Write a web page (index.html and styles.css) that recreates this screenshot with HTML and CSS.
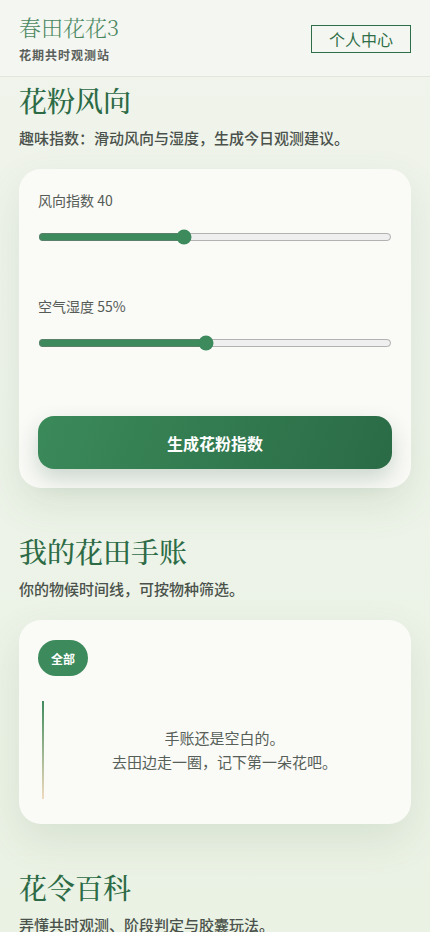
FILE: index.html
```html
<!DOCTYPE html>
<html lang="zh-CN">
<head>
    <meta charset="UTF-8">
    <meta name="viewport" content="width=device-width, initial-scale=1.0">
    <title>春田花花3</title>
    <link rel="stylesheet" href="styles.css">
</head>
<body>

    <header class="topbar">
        <div class="brand">
            <div class="brand-name">春田花花3</div>
            <div class="brand-sub">花期共时观测站</div>
        </div>
        <button class="profile-btn">个人中心</button>
    </header>

    <main class="page">
        <section class="section">
            <h2 class="section-title">花粉风向</h2>
            <p class="section-desc">趣味指数：滑动风向与湿度，生成今日观测建议。</p>
            <div class="card">
                <label class="field-label" for="wind">风向指数 40</label>
                <input class="slider" type="range" id="wind" min="0" max="98" value="40">

                <label class="field-label field-gap" for="humidity">空气湿度 55%</label>
                <input class="slider" type="range" id="humidity" min="20" max="94" value="55">

                <button class="primary-btn">生成花粉指数</button>
            </div>
        </section>

        <section class="section">
            <h2 class="section-title">我的花田手账</h2>
            <p class="section-desc">你的物候时间线，可按物种筛选。</p>
            <div class="card">
                <div class="chips">
                    <button class="chip active">全部</button>
                </div>
                <div class="timeline">
                    <p class="empty">手账还是空白的。<br>去田边走一圈，记下第一朵花吧。</p>
                </div>
            </div>
        </section>

        <section class="section">
            <h2 class="section-title">花令百科</h2>
            <p class="section-desc">弄懂共时观测、阶段判定与胶囊玩法。</p>
        </section>
    </main>

</body>
</html>
```

FILE: styles.css
```css
body {
    margin: 0;
    padding: 0;
    font-family: "Noto Sans CJK SC", "Noto Sans", sans-serif;
    background: linear-gradient(180deg, #f0f4ec 0%, #eaf2e4 100%);
    color: #4a524b;
}
.topbar {
    display: flex;
    justify-content: space-between;
    align-items: center;
    padding: 14px 19px 13px;
    background-color: #f4f6f1;
    border-bottom: 1px solid #e1e6dd;
}
.brand-name {
    font-family: "Noto Serif CJK SC", "AR PL UMing CN", serif;
    font-size: 22px;
    line-height: 26px;
    font-weight: 300;
    color: #4b8862;
}
.brand-sub {
    margin-top: 6px;
    font-size: 12px;
    line-height: 17px;
    font-weight: 700;
    letter-spacing: 1px;
    color: #5a605b;
}
.profile-btn {
    font-family: inherit;
    font-size: 16px;
    line-height: 18px;
    padding: 4px 17px;
    background: transparent;
    border: 1px solid #2f6e49;
    color: #2f6e49;
    cursor: pointer;
}
.page {
    padding: 5px 19px 0;
}
.section {
    margin-bottom: 45px;
}
.section-title {
    margin: 0;
    font-family: "Noto Serif CJK SC", "AR PL UMing CN", serif;
    font-size: 28px;
    line-height: 36px;
    font-weight: 500;
    color: #2c6b46;
}
.section-desc {
    margin: 8px 0 19px;
    font-size: 15px;
    line-height: 24px;
    font-weight: 500;
    color: #4a524b;
}
.card {
    background-color: #fafaf7;
    border-radius: 22px;
    padding: 20px 19px 19px;
    box-shadow: 0 16px 40px rgba(70, 110, 70, 0.12);
}
.field-label {
    display: block;
    font-size: 14px;
    line-height: 22px;
    color: #555b56;
    margin-bottom: 18px;
}
.field-gap {
    margin-top: 50px;
}
.slider {
    display: block;
    width: 100%;
    height: 16px;
    margin: 0;
    accent-color: #3d8a5c;
}
.primary-btn {
    display: block;
    width: 100%;
    margin-top: 65px;
    height: 53px;
    border: none;
    border-radius: 16px;
    background: linear-gradient(110deg, #3b8a5a 0%, #2a6b46 100%);
    color: #fff;
    font-family: inherit;
    font-size: 16px;
    font-weight: 700;
    box-shadow: 0 10px 22px rgba(40, 90, 60, 0.22);
    cursor: pointer;
}
.chips {
    display: flex;
    gap: 8px;
}
.chip {
    height: 36px;
    padding: 0 13px;
    border: none;
    border-radius: 18px;
    font-family: inherit;
    font-size: 12px;
    font-weight: 700;
    background-color: #e8eee5;
    color: #3d6b50;
}
.chip.active {
    background-color: #3d8a5c;
    color: #fff;
}
.timeline {
    margin: 25px 0 6px 4px;
    border-left: 2px solid;
    border-image: linear-gradient(180deg, #3d8a5c 0%, #f2dcc0 100%) 1;
    padding: 25px 0 25px 13px;
}
.empty {
    margin: 0;
    text-align: center;
    font-size: 15px;
    line-height: 24px;
    color: #566058;
}
```
